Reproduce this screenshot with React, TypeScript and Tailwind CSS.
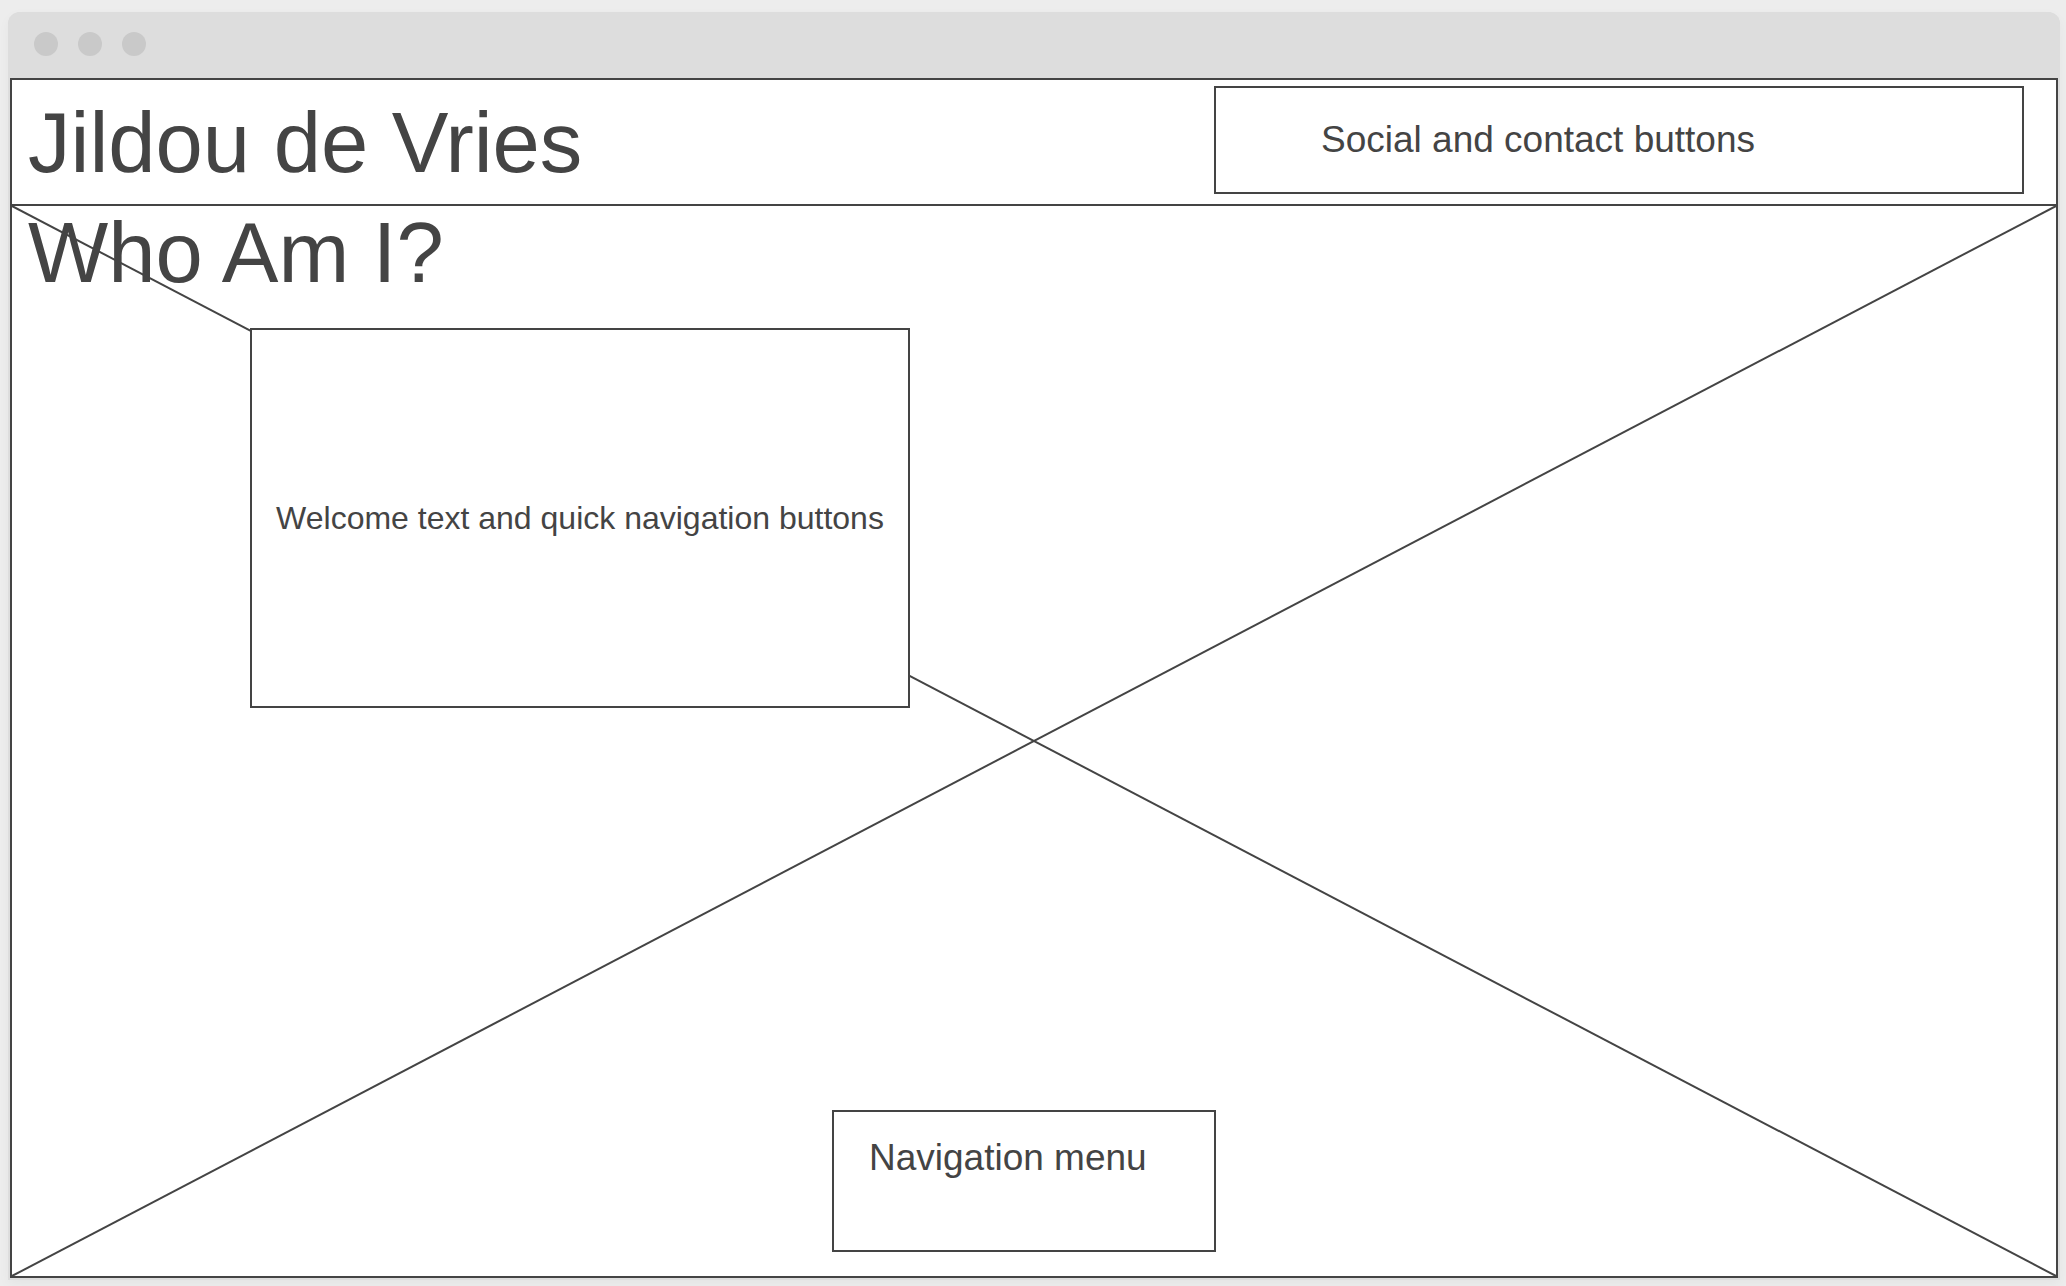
const windowDots = ["close", "minimise", "zoom"];

function TitleBar() {
  return (
    <div className="flex h-[66px] shrink-0 items-start gap-5 rounded-t-xl bg-[#dddddd] px-[26px] pt-5">
      {windowDots.map((dot) => (
        <span key={dot} className="size-6 rounded-full bg-[#c9c9c9]" />
      ))}
    </div>
  );
}

function Header() {
  return (
    <header className="flex h-[126px] shrink-0 items-start justify-between border-b-2 border-[#444444] pt-1.5 pr-8 pl-4">
      <h1 className="text-[85px] leading-[113px] whitespace-nowrap">Jildou de Vries</h1>
      <div className="flex h-[108px] w-[810px] items-center border-2 border-[#444444] bg-white pl-[105px] text-[37px]">
        Social and contact buttons
      </div>
    </header>
  );
}

function Hero() {
  return (
    <main className="relative flex flex-1 flex-col">
      <svg
        className="absolute inset-0 size-full"
        viewBox="0 0 100 100"
        preserveAspectRatio="none"
        stroke="#444444"
        strokeWidth="2"
        aria-hidden="true"
      >
        <line x1="0" y1="0" x2="100" y2="100" vectorEffect="non-scaling-stroke" />
        <line x1="0" y1="100" x2="100" y2="0" vectorEffect="non-scaling-stroke" />
      </svg>
      <h2 className="relative pl-4 text-[85px] leading-[94px]">Who Am I?</h2>
      <section className="relative mt-7 ml-[238px] flex h-[380px] w-[660px] items-center justify-center border-2 border-[#444444] bg-white text-[32px]">
        Welcome text and quick navigation buttons
      </section>
      <div className="relative mt-auto flex justify-center pr-5 pb-6">
        <nav className="h-[142px] w-96 border-2 border-[#444444] bg-white pt-6 pl-[35px] text-[37px] leading-[44px]">
          Navigation menu
        </nav>
      </div>
    </main>
  );
}

export default function App() {
  return (
    <div className="flex min-h-screen flex-col bg-[#ededed] pt-3 pr-1.5 pb-1.5 pl-2 font-['Liberation_Sans',Arial,sans-serif] text-[#444444]">
      <div className="flex flex-1 flex-col rounded-t-xl bg-[#dddddd] shadow-[0_4px_12px_rgba(0,0,0,0.04)]">
        <TitleBar />
        <div className="mx-0.5 mb-0.5 flex flex-1 flex-col border-2 border-[#444444] bg-white">
          <Header />
          <Hero />
        </div>
      </div>
    </div>
  );
}
